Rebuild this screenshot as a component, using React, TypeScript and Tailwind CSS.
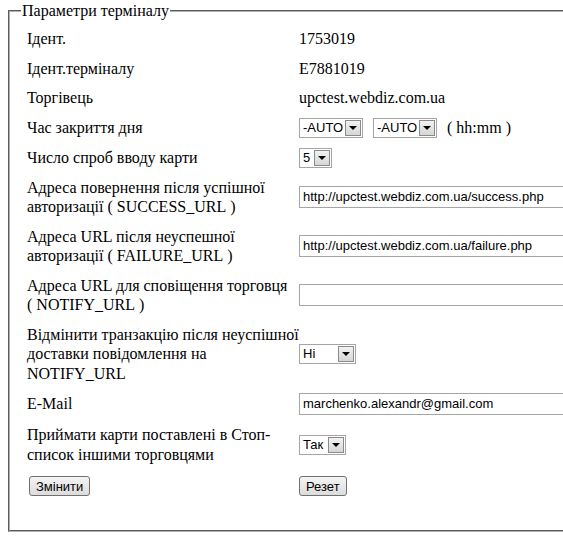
import type { ReactNode } from "react";

const serif = "font-['Liberation_Serif','Times_New_Roman',serif]";
const sans = "font-['Liberation_Sans',Arial,sans-serif]";

function Select({ value, width }: { value: string; width: string }) {
  return (
    <div
      className={`
        flex
        h-[20px]
        ${width}
        items-center
        justify-between

        border
        border-[#a5a5a5]

        bg-white

        pl-[3px]
        pr-[1px]

        text-[13px]
        text-black
        ${sans}
      `}
    >
      <span>{value}</span>

      <span
        className="
          flex
          h-[16px]
          w-[16px]
          items-center
          justify-center

          border
          border-[#8a8a8a]

          bg-gradient-to-b
          from-[#f2f2f2]
          to-[#d6d6d6]
        "
      >
        <span
          className="
            h-0
            w-0

            border-x-[4px]
            border-t-[4px]
            border-x-transparent
            border-t-black
          "
        />
      </span>
    </div>
  );
}

function TextInput({ value }: { value: string }) {
  return (
    <div
      className={`
        flex
        h-[22px]
        w-[300px]
        items-center

        border
        border-[#a5a5a5]

        bg-white

        px-[3px]

        text-[13px]
        text-black
        ${sans}
      `}
    >
      {value}
    </div>
  );
}

function Button({ label }: { label: string }) {
  return (
    <button
      className={`
        h-[20px]

        rounded-[3px]

        border
        border-[#707070]

        bg-gradient-to-b
        from-[#f4f4f4]
        to-[#dcdcdc]

        px-[6px]

        text-[13px]
        leading-none
        text-black
        ${sans}
      `}
    >
      {label}
    </button>
  );
}

type Row = {
  label: ReactNode;
  value: ReactNode;
};

const rows: Row[] = [
  { label: "Ідент.", value: "1753019" },
  { label: "Ідент.терміналу", value: "E7881019" },
  { label: "Торгівець", value: "upctest.webdiz.com.ua" },
  {
    label: "Час закриття дня",
    value: (
      <div className="flex items-center gap-[10px]">
        <Select value="-AUTO" width="w-[64px]" />
        <Select value="-AUTO" width="w-[64px]" />
        <span>( hh:mm )</span>
      </div>
    ),
  },
  {
    label: "Число спроб вводу карти",
    value: <Select value="5" width="w-[33px]" />,
  },
  {
    label: "Адреса повернення після успішної авторизації (\u00a0SUCCESS_URL\u00a0)",
    value: <TextInput value="http://upctest.webdiz.com.ua/success.php" />,
  },
  {
    label: "Адреса URL після неуспешної авторизації (\u00a0FAILURE_URL\u00a0)",
    value: <TextInput value="http://upctest.webdiz.com.ua/failure.php" />,
  },
  {
    label: "Адреса URL для сповіщення торговця (\u00a0NOTIFY_URL\u00a0)",
    value: <TextInput value="" />,
  },
  {
    label: "Відмінити транзакцію після неуспішної доставки повідомлення на NOTIFY_URL",
    value: <Select value="Hi" width="w-[57px]" />,
  },
  {
    label: "E-Mail",
    value: <TextInput value="marchenko.alexandr@gmail.com" />,
  },
  {
    label: "Приймати карти поставлені в Стоп-список іншими торговцями",
    value: <Select value="Так" width="w-[47px]" />,
  },
];

export default function App() {
  return (
    <div className={`h-[538px] w-[563px] overflow-hidden bg-white text-black ${serif}`}>
      <fieldset
        className="
          ml-[8px]
          mt-[2px]
          w-[620px]

          border-2
          border-[#b0b0b0]
          [border-style:groove]

          pb-[30px]
          pl-[17px]
          pt-[5px]
        "
      >
        <legend className="-ml-[6px] px-[1px] text-[16px] leading-[18px]">
          Параметри терміналу
        </legend>

        <div className="grid grid-cols-[272px_1fr] gap-y-[2px]">
          {rows.map((row, i) => (
            <div key={i} className="contents">
              <div className="flex min-h-[26px] items-center py-[4px] text-[16px] leading-[19.5px]">
                {row.label}
              </div>

              <div className="flex items-center py-[4px] text-[16px] leading-[19.5px]">
                {row.value}
              </div>
            </div>
          ))}

          {/* Buttons */}

          <div className="flex items-center py-[4px] pl-[2px] pt-[6px]">
            <Button label="Змінити" />
          </div>

          <div className="flex items-center py-[4px] pt-[6px]">
            <Button label="Резет" />
          </div>
        </div>
      </fieldset>
    </div>
  );
}
